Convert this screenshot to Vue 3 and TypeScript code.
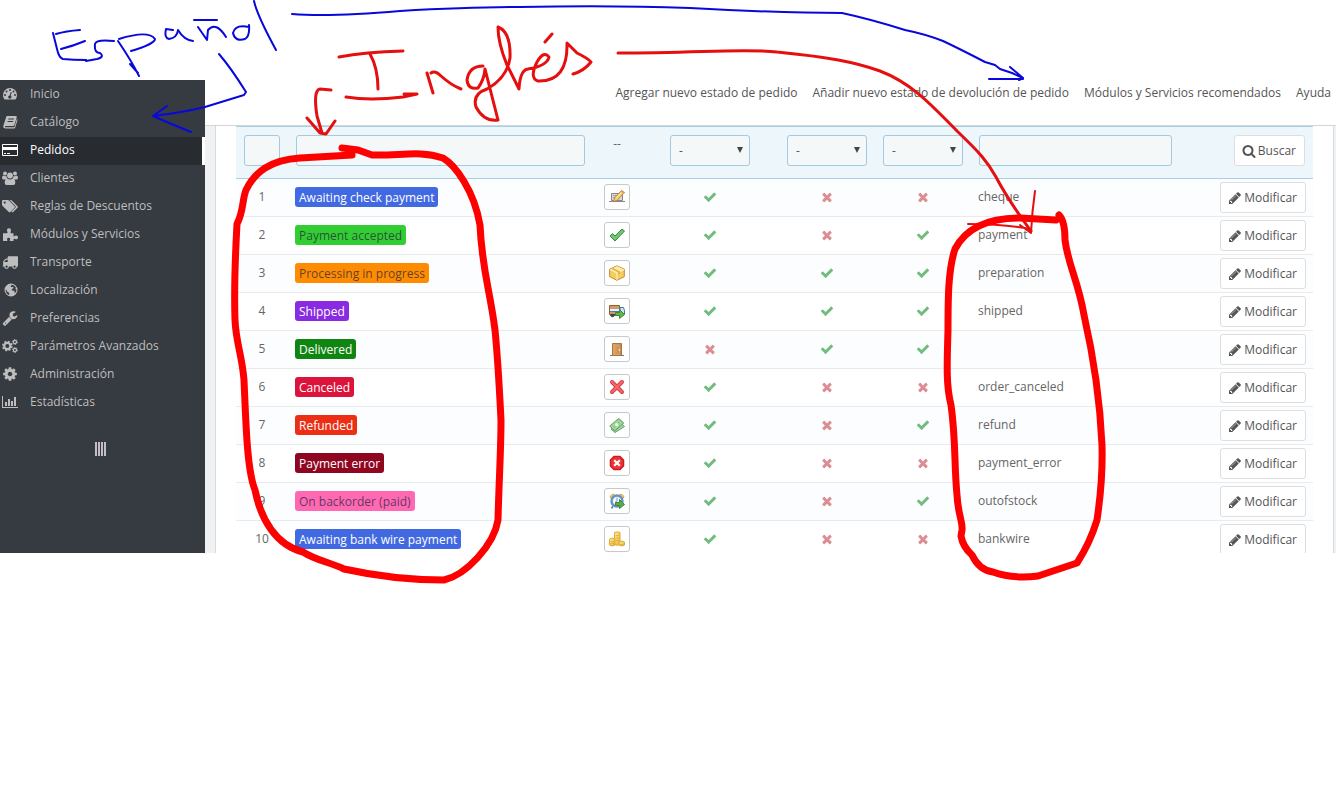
<script setup lang="ts">
import { reactive } from 'vue'

interface MenuItem {
  label: string
  icon: string
  active?: boolean
}

interface OrderState {
  id: number
  name: string
  color: string
  dark?: boolean
  icon: string
  flags: boolean[]
  template: string
}

const actions: string[] = [
  'Agregar nuevo estado de pedido',
  'Añadir nuevo estado de devolución de pedido',
  'Módulos y Servicios recomendados',
  'Ayuda',
]

const menu: MenuItem[] = [
  { label: 'Inicio', icon: 'gauge' },
  { label: 'Catálogo', icon: 'book' },
  { label: 'Pedidos', icon: 'card', active: true },
  { label: 'Clientes', icon: 'users' },
  { label: 'Reglas de Descuentos', icon: 'tags' },
  { label: 'Módulos y Servicios', icon: 'puzzle' },
  { label: 'Transporte', icon: 'truck' },
  { label: 'Localización', icon: 'globe' },
  { label: 'Preferencias', icon: 'wrench' },
  { label: 'Parámetros Avanzados', icon: 'cogs' },
  { label: 'Administración', icon: 'cog' },
  { label: 'Estadísticas', icon: 'chart' },
]

const states: OrderState[] = [
  { id: 1, name: 'Awaiting check payment', color: '#4169e1', icon: 'cheque', flags: [true, false, false], template: 'cheque' },
  { id: 2, name: 'Payment accepted', color: '#32cd32', dark: true, icon: 'accepted', flags: [true, false, true], template: 'payment' },
  { id: 3, name: 'Processing in progress', color: '#ff8c00', dark: true, icon: 'box', flags: [true, true, true], template: 'preparation' },
  { id: 4, name: 'Shipped', color: '#8a2be2', icon: 'lorry', flags: [true, true, true], template: 'shipped' },
  { id: 5, name: 'Delivered', color: '#108510', icon: 'door', flags: [false, true, true], template: '' },
  { id: 6, name: 'Canceled', color: '#dc143c', icon: 'cross', flags: [true, false, false], template: 'order_canceled' },
  { id: 7, name: 'Refunded', color: '#ec2e15', icon: 'money', flags: [true, false, true], template: 'refund' },
  { id: 8, name: 'Payment error', color: '#8f0621', icon: 'stop', flags: [true, false, false], template: 'payment_error' },
  { id: 9, name: 'On backorder (paid)', color: '#ff69b4', dark: true, icon: 'clock', flags: [true, false, true], template: 'outofstock' },
  { id: 10, name: 'Awaiting bank wire payment', color: '#4169e1', icon: 'coins', flags: [true, false, false], template: 'bankwire' },
]

const flagFilters: string[] = ['Enviar correo', 'Entrega', 'Factura']
const filter = reactive({ id: '', name: '', template: '', flags: ['', '', ''] })
</script>

<template>
  <div class="page">
    <svg class="defs" aria-hidden="true">
      <defs>
        <symbol id="check" viewBox="0 0 1792 1792"><path d="M1671 566q0 40-28 68l-724 724-136 136q-28 28-68 28t-68-28l-136-136-362-362q-28-28-28-68t28-68l136-136q28-28 68-28t68 28l294 295 656-657q28-28 68-28t68 28l136 136q28 28 28 68z" /></symbol>
        <symbol id="times" viewBox="0 0 1792 1792"><path d="M1490 1322q0 40-28 68l-136 136q-28 28-68 28t-68-28l-294-294-294 294q-28 28-68 28t-68-28l-136-136q-28-28-28-68t28-68l294-294-294-294q-28-28-28-68t28-68l136-136q28-28 68-28t68 28l294 294 294-294q28-28 68-28t68 28l136 136q28 28 28 68t-28 68l-294 294 294 294q28 28 28 68z" /></symbol>
        <symbol id="search" viewBox="0 0 1792 1792"><path d="M1216 832q0-185-131.5-316.5t-316.5-131.5-316.5 131.5-131.5 316.5 131.5 316.5 316.5 131.5 316.5-131.5 131.500-316.500zm512 832q0 52-38 90t-90 38q-54 0-90-38l-343-342q-179 124-399 124-143 0-273.5-55.500t-225-150-150-225-55.500-273.500 55.500-273.500 150-225 225-150 273.500-55.500 273.500 55.500 225 150 150 225 55.500 273.500q0 220-124 399l343 343q37 37 37 90z" /></symbol>
        <symbol id="pencil" viewBox="0 0 1792 1792"><path d="M491 1536l91-91-235-235-91 91v107h128v128h107zm523-928q0-22-22-22-10 0-17 7l-542 542q-7 7-7 17 0 22 22 22 10 0 17-7l542-542q7-7 7-17zm-54-192l416 416-832 832h-416v-416zm683 96q0 53-37 90l-166 166-416-416 166-165q36-38 90-38 53 0 91 38l235 234q37 39 37 91z" /></symbol>

        <symbol id="gauge" viewBox="0 0 16 16"><path fill-rule="evenodd" d="M8 2a7 7 0 0 1 7 7c0 1.500-.4 2.800-1.100 4-.2.300-.4.400-.7.400H2.800c-.3 0-.5-.1-.7-.4A7.500 7.500 0 0 1 1 9a7 7 0 0 1 7-7zM3 8a1 1 0 1 0 0 2 1 1 0 0 0 0-2zm1.500-3.500a1 1 0 1 0 0 2 1 1 0 0 0 0-2zM8 3a1 1 0 1 0 0 2 1 1 0 0 0 0-2zm3.500 1.500a1 1 0 1 0 0 2 1 1 0 0 0 0-2zM13 8a1 1 0 1 0 0 2 1 1 0 0 0 0-2zM8.700 6l-.9 3.400a1.600 1.600 0 1 0 1 .3l.9-3.400z" /></symbol>
        <symbol id="book" viewBox="0 0 16 16"><path fill-rule="evenodd" d="M5.600 2h8c.9 0 1.300.6 1.100 1.400l-2.300 7.700c-.2.700-.7 1-1.400 1H3.500c-.5 0-.7.300-.5.700.1.400.5.500 1 .5h7.700c.4 0 .7-.2.800-.6L14.900 5c.6.300.7.800.5 1.400l-2.200 7c-.2.700-.8 1.200-1.500 1.200H3.500C2 14.600 1 13.300 1.300 12L4 3.400C4.300 2.500 4.800 2 5.600 2zm.9 2.400-.3 1h5.600l.3-1zm-.8 2.500-.3 1H11l.3-1z" /></symbol>
        <symbol id="card" viewBox="0 0 16 16"><path fill-rule="evenodd" d="M1 2h14q1 0 1 1v10q0 1-1 1H1q-1 0-1-1V3q0-1 1-1zm0 1v2h14V3zM1 8v5h14V8zm1 3h2v1H2zm3 0h3v1H5z" /></symbol>
        <symbol id="users" viewBox="0 0 16 16"><circle cx="3" cy="3.500" r="2" /><circle cx="13" cy="3.500" r="2" /><circle cx="8" cy="5.500" r="2.900" /><path d="M0 8q0-2.500 1.500-2.500Q3 6.500 4.500 6q0 1.500.7 2.400Q4 8.500 3.200 9.400H1.300Q0 9.400 0 8zm16 0q0-2.500-1.500-2.500-1.500 1-3 .5 0 1.500-.7 2.400 1.200.1 2 1h1.900Q16 9.400 16 8zM5.300 8.500Q8 10.600 10.700 8.500q2.600 0 2.600 4.500 0 2-2 2H4.700q-2 0-2-2 0-4.500 2.600-4.500z" /></symbol>
        <symbol id="tags" viewBox="0 0 16 16"><path fill-rule="evenodd" d="M1 2h4.600q.8 0 1.400.6l5.600 5.600q.8.800 0 1.600L8.300 14.100q-.8.700-1.500 0L.6 8Q0 7.400 0 6.500V3q0-1 1-1zm1.700 1.500a1.100 1.100 0 1 0 0 2.200 1.100 1.100 0 0 0 0-2.200z" /><path d="M7.500 2h1q.8 0 1.400.6l5.600 5.600q.8.800 0 1.600l-4.300 4.300q-.8.700-1.500 0l-.4-.4 4-4q.9-.9 0-1.800z" /></symbol>
        <symbol id="puzzle" viewBox="0 0 16 16"><path d="M1 7.300h3.800c1.100 0 .9-.8.500-1.500C4.500 4 5.200 2.300 7 2.300S9.400 4 8.700 5.700C8.300 6.600 8.500 7.300 9.500 7.300h2v2.200c0 1 .7 1 1.500.5 1.500-.9 3-.1 3 1.500s-1.500 2.300-3 1.500c-.8-.5-1.500-.4-1.500.6V15H8.300c-.7 0-.8-.5-.4-1.200.6-1.200-.2-2-1.300-2s-2 .8-1.300 2c.4.7.2 1.200-.5 1.200H1z" /></symbol>
        <symbol id="truck" viewBox="0 0 1792 1792"><path d="M640 1408q0-52-38-90t-90-38-90 38-38 90 38 90 90 38 90-38 38-90zm-384-512h384v-256h-158q-13 0-22 9l-195 195q-9 9-9 22v30zm1280 512q0-52-38-90t-90-38-90 38-38 90 38 90 90 38 90-38 38-90zm256-1088v1024q0 15-4 26.500t-13.500 18.500-16.500 11.500-23.500 6-22.500 2-25.500 0-22.500-.5q0 106-75 181t-181 75-181-75-75-181h-384q0 106-75 181t-181 75-181-75-75-181h-64q-3 0-22.500.5t-25.500 0-22.500-2-23.500-6-16.500-11.500-13.500-18.500-4-26.500q0-26 19-45t45-19v-320q0-8-.5-35t0-38 2.500-34.500 6.500-37 14-30.500 22.500-30l198-198q19-19 50.500-32t58.500-13h160v-192q0-26 19-45t45-19h1024q26 0 45 19t19 45z" /></symbol>
        <symbol id="globe" viewBox="0 0 16 16"><path fill-rule="evenodd" d="M9 1.500a6.500 6.500 0 1 1 0 13 6.500 6.500 0 0 1 0-13zM10 2.800 8.500 4l1 1.200 1.300-.4 1 1.200-1.500.8L9.500 8.300l1.800.2 1.500 1.200-.4 1.600c1.200-.8 2-2 2.200-3.400l-1.200-.6.400-1.500C13 4 11.600 3 10 2.800zM4 7l-.3 1.500c.2 2 1.300 3.700 3.100 4.600L7.500 12 6.600 10.500 5 9.500z" /></symbol>
        <symbol id="wrench" viewBox="0 0 1792 1792"><path d="M448 1472q0-26-19-45t-45-19-45 19-19 45 19 45 45 19 45-19 19-45zm644-420l-682 682q-37 37-90 37-52 0-91-37l-106-108q-38-36-38-90 0-53 38-91l681-681q39 98 114.500 173.500t173.500 114.500zm634-435q0 39-23 106-47 134-164.500 217.500t-258.500 83.500q-185 0-316.500-131.500t-131.500-316.500 131.500-316.500 316.500-131.500q58 0 121.500 16.500t107.500 46.500q16 11 16 28t-16 28l-293 169v224l193 107q5-3 79-48.500t135.500-81 70.500-35.500q15 0 23.500 10t8.500 25z" /></symbol>
        <symbol id="cogs" viewBox="0 0 16 16"><g fill="none" stroke="currentColor"><circle cx="5.300" cy="8" r="3.100" stroke-width="2.200" /><circle cx="5.300" cy="8" r="4.600" stroke-width="1.400" stroke-dasharray="2 1.613" /><circle cx="12.900" cy="4" r="1.600" stroke-width="1.200" /><circle cx="12.900" cy="4" r="2.500" stroke-width="1" stroke-dasharray="1.300 1.318" /><circle cx="12.900" cy="12" r="1.600" stroke-width="1.200" /><circle cx="12.900" cy="12" r="2.500" stroke-width="1" stroke-dasharray="1.300 1.318" /></g></symbol>
        <symbol id="cog" viewBox="0 0 1792 1792"><path d="M1152 896q0-106-75-181t-181-75-181 75-75 181 75 181 181 75 181-75 75-181zm512-109v222q0 12-8 23t-20 13l-185 28q-19 54-39 91 35 50 107 138 10 12 10 25t-9 23q-27 37-99 108t-94 71q-12 0-26-9l-138-108q-44 23-91 38-16 136-29 186-7 28-36 28h-222q-14 0-24.500-8.500t-11.500-21.500l-28-184q-49-16-90-37l-141 107q-10 9-25 9-14 0-25-11-126-114-165-168-7-10-7-23 0-12 8-23 15-21 51-66.500t54-70.500q-27-50-41-99l-183-27q-13-2-21-12.500t-8-23.500v-222q0-12 8-23t19-13l186-28q14-46 39-92-40-57-107-138-10-12-10-24 0-10 9-23 26-36 98.500-107.500t94.500-71.500q13 0 26 10l138 107q44-23 91-38 16-136 29-186 7-28 36-28h222q14 0 24.500 8.500t11.500 21.500l28 184q49 16 90 37l142-107q9-9 24-9 13 0 25 10 129 119 165 170 7 8 7 22 0 12-8 23-15 21-51 66.500t-54 70.500q26 50 41 98l183 28q13 2 21 12.500t8 23.500z" /></symbol>
        <symbol id="chart" viewBox="0 0 16 16"><path d="M0 2h1v11h15v1H0zM3 8h2v4H3zm3-3h2v7H6zm3 2h2v5H9zm3-4h2v9h-2z" /></symbol>

        <linearGradient id="gold" x2="1" y2="1"><stop stop-color="#fff0a0" /><stop offset="1" stop-color="#e8b030" /></linearGradient>
        <linearGradient id="wood" x2="1"><stop stop-color="#dcab70" /><stop offset="1" stop-color="#c08444" /></linearGradient>
        <symbol id="cheque" viewBox="0 0 16 16"><path d="M2.500 4.500h11v7h-11z" fill="#d8dadd" stroke="#85888c" /><path d="M0 12.500h16" stroke="#85888c" /><path d="M4 6.500h5M4 8.500h3" stroke="#9aa0a8" /><path d="M4.500 12.500 5.500 9l7-7.500 3 2L8 11.500z" fill="#f7ce6a" stroke="#bd8430" /><path d="m7 9 6-6" stroke="#fff0b4" /><path d="m12 2 3 2.500" stroke="#e4967c" stroke-width="1.500" /></symbol>
        <symbol id="accepted" viewBox="0 0 16 16"><path d="m1 9 2.500-2.500L6 9l7-7 2.500 2L6 14z" fill="#68bf68" stroke="#3c8f44" stroke-linejoin="round" /><path d="m3 8.500 3 3L13.500 4" fill="none" stroke="#8ad08a" /></symbol>
        <symbol id="box" viewBox="0 0 16 16"><path d="m8 .8 7.300 3.400v7.500L8 15.300.7 11.700V4.200z" fill="#f5ce63" stroke="#c08a2c" /><path d="M1 4.500 8 8l7-3.500L8 1z" fill="#ffeaa5" /><path d="M8 8v7M1 4.500 8 8l7-3.500" fill="none" stroke="#fff3bc" /><path d="m4 3 7 3.500v2.200L9 9.500V7.500L2.500 4z" fill="#e4b050" /></symbol>
        <symbol id="lorry" viewBox="0 0 16 16"><path d="M.5 2.500h10v9H.5z" fill="#d39a63" stroke="#8e6035" /><path d="M1 6h9v2H1z" fill="#eaf3ff" /><path d="M1 8h9v1H1z" fill="#4879b8" /><path d="M11 4.500h3.500l1 3v4H11z" fill="#c8e5fa" stroke="#3c78ad" /><path d="M1 12h13" stroke="#555" stroke-width="2" /><circle cx="3.500" cy="12.500" r="1.800" fill="#444" /><path d="M6.500 9.500h4v-3l5 5-5 4v-3h-4z" fill="#68b34c" stroke="#3c8a34" stroke-linejoin="round" /></symbol>
        <symbol id="door" viewBox="0 0 16 16"><path d="M1 14.500h14" stroke="#777" /><path d="M3.500 2.500h9v12h-9z" fill="url(#wood)" stroke="#a9753f" /><path d="M5.500 4.500h5v9h-5z" fill="none" stroke="#d6a468" /><circle cx="10.500" cy="9" r=".9" fill="#ffe48b" /></symbol>
        <symbol id="cross" viewBox="0 0 16 16"><path d="m3 3 10 10M13 3 3 13" stroke="#d6383d" stroke-width="4" stroke-linecap="round" /><path d="m3 3 10 10M13 3 3 13" stroke="#f2686b" stroke-width="2.400" stroke-linecap="round" /></symbol>
        <symbol id="money" viewBox="0 0 16 16"><path d="m2 12 9-7 4.500 4.500L6 15.500z" fill="#a5d6a0" stroke="#5fa264" /><path d="m.7 9 9-7.500 5 4.500-9 8z" fill="#95cb90" stroke="#5fa264" /><path d="m2.500 9.300 7-5.800 3 2.800-7 5.800z" fill="none" stroke="#b1dca8" /><circle cx="7.700" cy="7.800" r="1.700" fill="#edf8e5" /></symbol>
        <symbol id="stop" viewBox="0 0 16 16"><path d="M5 1.500h6L14.500 5v6L11 14.500H5L1.500 11V5z" fill="#ef3434" stroke="#d01a20" stroke-width="1.500" /><path d="m5.200 5.200 5.600 5.600m0-5.600-5.600 5.600" stroke="#fff" stroke-width="2.200" /></symbol>
        <symbol id="clock" viewBox="0 0 16 16"><path d="M1 3.500 4 1l2 1.500-4 3zm14 0L12 1l-2 1.500 4 3z" fill="#ffc85d" stroke="#d79b42" /><path d="m4 13-1.500 2.500" stroke="#777" stroke-width="1.500" /><circle cx="8" cy="8" r="5.500" fill="#edf6ff" stroke="#5f94c6" stroke-width="2.400" /><path d="M8 4.500V8L6 9.500" fill="none" stroke="#99a" /><path d="M6.500 9.500h4v-3l5 5-5 4v-3h-4z" fill="#60a84c" stroke="#3c8a34" stroke-linejoin="round" /></symbol>
        <symbol id="coins" viewBox="0 0 16 16"><g fill="url(#gold)" stroke="#dba935"><path d="M5.500 1.500q3-1.500 5.500 0v12q-3 1.500-5.500 0z" /><path d="M.5 8q2.500-2 5.500 0v6q-3 2-5.500 0z" /><path d="M10 11q3-2 5.500 0v3q-2.500 2-5.500 0z" /></g><path d="M6.500 4.500h3.500M6.500 7h3.500M7 9.500h3M1.500 10.500h3.500M1.500 12.500h3.500M11 13.500h3.500" stroke="#dba935" stroke-width=".7" /></symbol>
      </defs>
    </svg>

    <div class="shell">
      <nav class="sidebar" aria-label="Principal">
        <ul>
          <li v-for="item in menu" :key="item.label">
            <a href="#" :class="{ active: item.active }">
              <svg class="menu-icon"><use :href="`#${item.icon}`" /></svg>
              <span>{{ item.label }}</span>
            </a>
          </li>
        </ul>
        <button class="collapse" type="button" aria-label="Contraer menú"><i></i><i></i><i></i><i></i></button>
      </nav>

      <main class="main">
        <header class="toolbar">
          <a v-for="action in actions" :key="action" href="#">{{ action }}</a>
        </header>
        <section class="panel">
          <table>
            <colgroup>
              <col class="c-id"><col><col class="c-icon"><col class="c-send"><col class="c-flag"><col class="c-flag"><col class="c-template"><col class="c-action">
            </colgroup>
            <thead>
              <tr>
                <th><input v-model="filter.id" type="text" aria-label="ID"></th>
                <th><input v-model="filter.name" type="text" aria-label="Nombre"></th>
                <th class="center">--</th>
                <th v-for="(label, i) in flagFilters" :key="label" class="center">
                  <span class="select">
                    <select v-model="filter.flags[i]" :aria-label="label">
                      <option value="">-</option>
                      <option value="1">Sí</option>
                      <option value="0">No</option>
                    </select>
                    <svg viewBox="0 0 6 6"><path d="M0 0h6L3 6z" /></svg>
                  </span>
                </th>
                <th><input v-model="filter.template" type="text" aria-label="Plantilla"></th>
                <th class="right"><button class="btn" type="button"><svg><use href="#search" /></svg>Buscar</button></th>
              </tr>
            </thead>
            <tbody>
              <tr v-for="state in states" :key="state.id">
                <td class="center">{{ state.id }}</td>
                <td><span class="badge" :class="{ dark: state.dark }" :style="{ backgroundColor: state.color }">{{ state.name }}</span></td>
                <td class="center"><span class="thumb"><svg><use :href="`#${state.icon}`" /></svg></span></td>
                <td v-for="(flag, i) in state.flags" :key="i" class="center">
                  <svg class="flag" :class="flag ? 'yes' : 'no'"><use :href="flag ? '#check' : '#times'" /></svg>
                </td>
                <td>{{ state.template }}</td>
                <td class="right"><button class="btn" type="button"><svg><use href="#pencil" /></svg>Modificar</button></td>
              </tr>
            </tbody>
          </table>
        </section>
      </main>
    </div>

    <svg class="ink" width="1336" height="789" viewBox="0 0 1336 789" role="img" aria-label="Español, Inglés">
      <g class="blue">
        <path d="M53 33 57 49Q59 58 63 59 73 60 86 60M56 34Q66 31 80 30M61 49Q73 46 85 41M114 41Q96 39 95 44 94 53 100 53 105 57 97 59L86 61M118 41Q131 60 139 76M130 64l8 9M119 39C135 34 150 32 155 39 155 42 145 47 131 51M173 30 166 29Q164 38 169 39 177 38 178 30 184 40 193 41M194 20h23M198 27l9 13 1-10Q216 21 226 37M249 27Q235 24 233 33 235 42 245 39 250 36 249 25M254 1Q257 15 276 50" />
        <path d="M219 54Q231 68 246 92L244 95 205 107Q180 113 153 116M167 106l-14 10Q171 124 191 132M292 14Q330 17 400 11 470 7 520 7 610 5 690 8 780 13 842 13 870 19 905 30 925 34 943 41 960 49 985 62L995 65 1000 69 1012 73 1023 78M1010 67l13 11-4 2M989 79h34" />
      </g>
      <g class="red">
        <path class="pen" d="M339 57Q365 52 403 51M370 54Q378 68 378 89M346 97Q370 101 403 97L417 94H404M427 73l6 20M431 73Q435 70 441 76 451 85 461 89M483 66Q469 66 467 80 468 90 478 88 484 80 485 69L498 120Q484 122 476 107 472 94 487 89 507 78 510 58 511 32 498 27 498 43 507 65L519 89Q520 70 528 69 547 66 549 57 544 50 537 62 529 78 538 81 568 82 567 43L577 53Q589 59 591 62 584 71 573 74M545 42l7-8M331 90 320 89Q313 90 317 116L322 133M307 118l13 15 6 1 9-13" />
        <path class="pen" d="M618 53C700 53 745 48 777 52 828 57 855 62 880 71 914 84 935 109 957 131 980 153 987 161 996 177 1008 200 1020 216 1031 231" />
        <path class="line" d="M1035 191Q1032 212 1031 233L1020 225M968 224Q1004 224 1030 229" />
        <path class="marker" d="M352 155 300 158C270 160 255 172 246 190 242 200 244 210 237 224 235 260 234 290 235 320 236 343 242 355 244 380 246 425 247 470 255 490 261 520 276 545 303 552 317 561 330 562 344 569 380 577 410 580 444 580 466 575 494 545 498 520 499 480 501 450 501 420 499 380 497 350 495 330 490 290 482 270 480 225 474 190 455 165 443 158 420 150 400 156 372 155L358 150 342 148" />
        <path class="marker" d="M1056 220 1020 218C985 218 965 230 955 249 948 270 948 300 948 330 947 365 946 385 951 405 956 440 954 465 957 495 958 515 963 522 962 530L961 536Q963 547 972 555 979 570 993 572 1012 579 1038 576L1077 563Q1090 543 1097 520 1103 480 1102 445C1100 400 1092 350 1084 315 1078 280 1068 265 1065 240 1065 224 1062 218 1059 215" />
      </g>
    </svg>
  </div>
</template>

<style>
body {
  margin: 0;
  background: #fff;
}
</style>

<style scoped>
* {
  box-sizing: border-box;
}
.page {
  position: relative;
  height: 100vh;
  padding: 80px 0 236px;
  overflow: hidden;
  font: 12px/18px "Open Sans", "Noto Sans", sans-serif;
  color: #666;
}
.defs {
  position: absolute;
  width: 0;
  height: 0;
}
a {
  text-decoration: none;
}
svg {
  fill: currentColor;
}
.shell {
  display: flex;
  height: 100%;
  overflow: hidden;
}
.sidebar {
  flex: 0 0 205px;
  padding-top: 1px;
  background: #363a41;
  color: #bebebe;
}
.sidebar ul {
  list-style: none;
  margin: 0;
  padding: 0;
}
.sidebar a {
  display: flex;
  align-items: center;
  gap: 12px;
  height: 28px;
  padding: 0 0 2px 2px;
  color: #bebebe;
}
.sidebar a.active {
  background: #282b30;
  border-right: 3px solid #fff;
  color: #fff;
}
.menu-icon {
  width: 16px;
  height: 16px;
}
.collapse {
  display: flex;
  gap: 1px;
  margin: 25px auto 0 95px;
  padding: 0;
  border: 0;
  background: none;
}
.collapse i {
  width: 2px;
  height: 14px;
  background: #c6bdc9;
}
.main {
  flex: 1;
  min-width: 0;
  display: flex;
  flex-direction: column;
  background: #eff1f2;
}
.toolbar {
  flex: none;
  display: flex;
  justify-content: flex-end;
  gap: 15px;
  height: 46px;
  padding: 4px 5px 0 0;
  border-bottom: 1px solid #d3d5d7;
  background: #fff;
  white-space: nowrap;
}
.toolbar a {
  color: #555;
}
.panel {
  flex: 1;
  margin: 0 2px 0 10px;
  padding: 0 20px;
  border: solid #d8dadc;
  border-width: 0 1px;
  background: #fff;
}
table {
  width: 100%;
  table-layout: fixed;
  border-collapse: separate;
  border-spacing: 0;
}
.c-id {
  width: 52px;
}
.c-icon {
  width: 48px;
}
.c-send {
  width: 138px;
}
.c-flag {
  width: 96px;
}
.c-template {
  width: 209px;
}
.c-action {
  width: 133px;
}
th {
  height: 53px;
  padding: 8px 8px 0;
  border-top: 1px solid #a9cfe4;
  border-bottom: 1px solid #a9cfe4;
  background: #ecf6fb;
  font-weight: 400;
  text-align: left;
  vertical-align: top;
}
td {
  height: 38px;
  padding: 0 7px 2px;
  border-bottom: 1px solid #e8ebed;
  vertical-align: middle;
}
td.right {
  padding-bottom: 0;
}
tbody tr:nth-child(odd) td {
  background: #fcfdfe;
}
.center {
  text-align: center;
}
.right {
  text-align: right;
}
input,
select {
  display: block;
  width: 100%;
  height: 31px;
  padding: 0 8px;
  border: 1px solid #a3cadf;
  border-radius: 3px;
  background: #f5f8f9;
  color: #555;
  font: inherit;
}
select {
  appearance: none;
}
.select {
  position: relative;
  display: inline-block;
  width: 80px;
  vertical-align: top;
}
.select svg {
  position: absolute;
  top: 12px;
  right: 7px;
  width: 6px;
  height: 6px;
  color: #444;
}
.btn {
  display: inline-flex;
  align-items: center;
  gap: 2px;
  height: 31px;
  padding: 0 8px 0 7px;
  border: 1px solid #dcdee0;
  border-radius: 3px;
  background: #fff;
  color: #555;
  font: inherit;
  vertical-align: top;
}
.btn svg {
  width: 14px;
  height: 14px;
}
.badge {
  display: inline-block;
  height: 20px;
  padding: 0 4px;
  border-radius: 3px;
  color: #fff;
  line-height: 21px;
  vertical-align: middle;
}
.badge.dark {
  color: rgba(40, 40, 60, 0.75);
}
.thumb {
  display: inline-flex;
  align-items: center;
  justify-content: center;
  width: 26px;
  height: 26px;
  border: 1px solid #c8c9cb;
  border-radius: 3px;
  background: #fff;
  vertical-align: middle;
}
.thumb svg {
  width: 16px;
  height: 16px;
}
.flag {
  display: inline-block;
  width: 14px;
  height: 14px;
  vertical-align: middle;
}
.yes {
  color: #72bd7e;
}
.no {
  color: #de8c93;
}
.ink {
  position: absolute;
  top: 0;
  left: 0;
  pointer-events: none;
}
.ink path {
  fill: none;
  stroke-linecap: round;
  stroke-linejoin: round;
}
.blue {
  stroke: #0808dc;
  stroke-width: 2;
}
.red {
  stroke: #e60f0f;
}
.pen {
  stroke-width: 3;
}
.line {
  stroke-width: 2;
}
.marker {
  stroke: #fe0000;
  stroke-width: 7;
}
</style>
